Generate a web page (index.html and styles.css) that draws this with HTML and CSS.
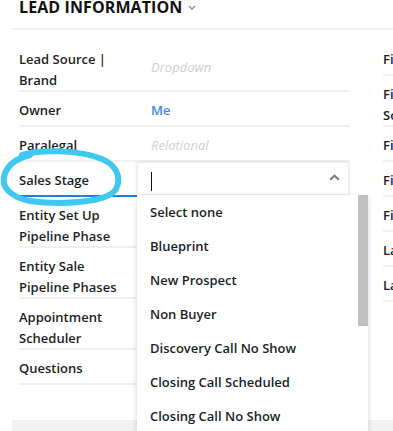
FILE: index.html
```html
<!DOCTYPE html>
<html lang="en">
<head>
  <meta charset="UTF-8">
  <title>Lead Information</title>
  <link rel="stylesheet" href="styles.css">
</head>
<body>

  <div class="page">
    <!-- Section heading -->
    <div class="section-head">
      <h2>LEAD INFORMATION</h2>
      <svg class="head-chevron" width="8" height="5" viewBox="0 0 8 5"><path d="M1 1l3 3 3-3" fill="none" stroke="#8a8a8a" stroke-width="1.3"/></svg>
    </div>

    <div class="fields">
      <!-- Left column -->
      <div class="col col-left">
        <div class="row">
          <div class="label">Lead Source |<br>Brand</div>
          <div class="value placeholder">Dropdown</div>
        </div>
        <div class="row">
          <div class="label">Owner</div>
          <div class="value link">Me</div>
        </div>
        <div class="row">
          <div class="label">Paralegal</div>
          <div class="value placeholder">Relational</div>
        </div>
        <div class="row row-active">
          <div class="label">Sales Stage</div>
          <div class="value"></div>

          <!-- Open dropdown -->
          <div class="picker">
            <div class="picker-input">
              <span class="caret"></span>
              <svg class="up-chevron" width="11" height="7" viewBox="0 0 11 7"><path d="M1.2 5.8L5.5 1.6l4.3 4.2" fill="none" stroke="#7a7a7a" stroke-width="2"/></svg>
            </div>
            <div class="picker-list">
              <div class="option">Select none</div>
              <div class="option">Blueprint</div>
              <div class="option">New Prospect</div>
              <div class="option">Non Buyer</div>
              <div class="option">Discovery Call No Show</div>
              <div class="option">Closing Call Scheduled</div>
              <div class="option">Closing Call No Show</div>
              <div class="scroll-thumb"></div>
            </div>
          </div>
        </div>
        <div class="row">
          <div class="label">Entity Set Up<br>Pipeline Phase</div>
          <div class="value"></div>
        </div>
        <div class="row">
          <div class="label">Entity Sale<br>Pipeline Phases</div>
          <div class="value"></div>
        </div>
        <div class="row">
          <div class="label">Appointment<br>Scheduler</div>
          <div class="value"></div>
        </div>
        <div class="row">
          <div class="label">Questions</div>
          <div class="value"></div>
        </div>
      </div>

      <!-- Right column (cut off by the window) -->
      <div class="col col-right">
        <div class="row"><div class="label">First Name</div></div>
        <div class="row"><div class="label">First Lead<br>Source</div></div>
        <div class="row"><div class="label">First Contact</div></div>
        <div class="row"><div class="label">First Call</div></div>
        <div class="row"><div class="label">First Meeting</div></div>
        <div class="row"><div class="label">Last Name</div></div>
        <div class="row"><div class="label">Last Contact</div></div>
      </div>
    </div>

    <div class="footer-band"></div>

    <!-- Hand-drawn highlight around Sales Stage -->
    <svg class="scribble" width="124" height="62" viewBox="0 0 124 62">
      <path d="M22 8 C40 2, 80 3, 102 12 C116 18, 122 30, 116 42 C108 56, 60 58, 30 54 C10 50, 2 40, 4 30 C6 20, 14 12, 30 8" fill="none" stroke="#3fc9f0" stroke-width="6" stroke-linecap="round"/>
    </svg>
  </div>

</body>
</html>
```

FILE: styles.css
```css
body {
  margin: 0;
  font-family: 'Open Sans', 'Noto Sans', sans-serif;
  background: #fff;
  color: #1e1e1e;
  overflow: hidden;
}

.page {
  position: relative;
  width: 393px;
  height: 431px;
  overflow: hidden;
  padding-left: 19px;
  box-sizing: border-box;
}

/* Heading */
.section-head {
  display: flex;
  align-items: flex-start;
  gap: 6px;
  margin-left: -7px;
  padding-left: 7px;
  margin-top: -4px;
  height: 34px;
  border-bottom: 2px solid #f0f0f0;
  box-sizing: border-box;
}

.section-head h2 {
  margin: 0;
  font-size: 16px;
  line-height: 22px;
  font-weight: 700;
  color: #111;
  letter-spacing: 0.1px;
}

.head-chevron {
  margin-top: 9px;
}

/* Field grid */
.fields {
  display: grid;
  grid-template-columns: 331px 200px;
  column-gap: 33px;
  margin-top: 11px;
}

.row {
  display: flex;
  min-height: 35px;
  padding-top: 8px;
  border-bottom: 2px solid #f0f0f0;
  box-sizing: border-box;
  font-size: 13px;
  font-weight: 600;
  line-height: 20.5px;
}

.col-left .label {
  width: 119px;
  flex-shrink: 0;
}

.col-right .label {
  white-space: nowrap;
}

.value {
  padding-left: 13px;
  align-self: center;
  margin-top: -4px;
}

.placeholder {
  color: #d0d0d0;
  font-style: italic;
  font-weight: 400;
}

.link {
  color: #3d86e8;
  font-weight: 600;
}

.row-active {
  position: relative;
  border-bottom-color: #1f7fe6;
}

/* Dropdown */
.picker {
  position: absolute;
  left: 118px;
  top: 0;
  z-index: 2;
}

.picker-input {
  position: relative;
  width: 212px;
  height: 33px;
  background: #fff;
  border: 1px solid #ececec;
  box-shadow: 0 1px 4px rgba(0, 0, 0, 0.12);
  box-sizing: border-box;
}

.caret {
  position: absolute;
  left: 13px;
  top: 9px;
  width: 1px;
  height: 19px;
  background: #111;
}

.up-chevron {
  position: absolute;
  right: 8px;
  top: 11px;
}

.picker-list {
  position: relative;
  width: 231px;
  background: #fff;
  box-shadow: 0 2px 6px rgba(0, 0, 0, 0.16);
  padding-right: 10px;
  box-sizing: border-box;
}

.option {
  height: 34px;
  line-height: 34px;
  padding-left: 13px;
  font-size: 13px;
  font-weight: 600;
  color: #1b1f27;
  white-space: nowrap;
}

.scroll-thumb {
  position: absolute;
  right: 0;
  top: 0;
  width: 10px;
  height: 131px;
  background: #c1c1c1;
}

.footer-band {
  margin-top: 35px;
  margin-left: -7px;
  height: 20px;
  background: #f2f2f2;
}

.scribble {
  position: absolute;
  left: 0;
  top: 147px;
}
```
